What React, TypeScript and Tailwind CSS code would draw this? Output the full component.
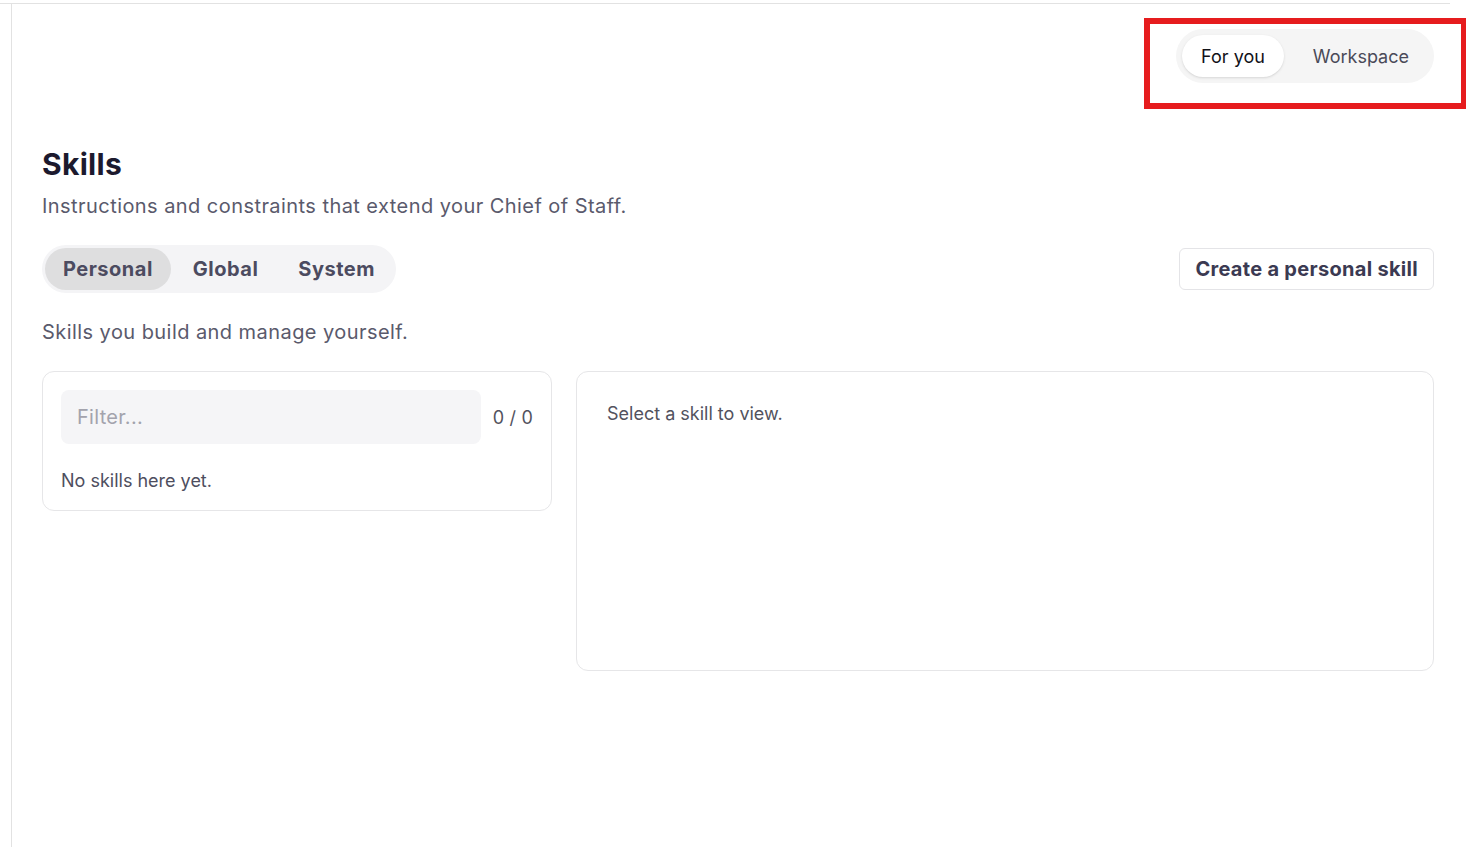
import { useState } from 'react';

const tabs = ['Personal', 'Global', 'System'];

export default function App() {
  const [scope, setScope] = useState<'you' | 'workspace'>('you');
  const [tab, setTab] = useState('Personal');
  const [filter, setFilter] = useState('');

  return (
    <div className="min-h-[847px] bg-white font-['Inter',sans-serif] text-[#52525e]">
      <div className="ml-0 w-[1450px] border-t border-[#e2e2e2] mt-[3px]" />
      <div className="relative ml-[11px] min-h-[843px] border-l border-[#e2e2e2]">
        <div className="pr-8 pl-[30px]">
          <div className="flex justify-end pt-[25px]">
            <div className="flex items-center gap-[10px] rounded-full bg-[#f5f5f5] p-[6px]">
              <button
                onClick={() => setScope('you')}
                className={`h-[42px] rounded-full px-[19px] text-[18px] ${
                  scope === 'you' ? 'bg-white text-[#111118] shadow-sm' : 'text-[#4a4a58]'
                }`}
              >
                For you
              </button>
              <button
                onClick={() => setScope('workspace')}
                className={`h-[42px] rounded-full px-[19px] text-[18px] ${
                  scope === 'workspace' ? 'bg-white text-[#111118] shadow-sm' : 'text-[#4a4a58]'
                }`}
              >
                Workspace
              </button>
            </div>
          </div>

          <h1 className="mt-[63px] text-[30px] font-bold leading-[36px] tracking-[0.01em] text-[#1c1a2e]">Skills</h1>
          <p className="mt-[10px] text-[20px] leading-[28px] tracking-[0.022em] text-[#5a5a6c]">
            Instructions and constraints that extend your Chief of Staff.
          </p>

          <div className="mt-[25px] flex items-center justify-between">
            <div className="flex items-center gap-[4px] rounded-full bg-[#f4f4f6] p-[3px]">
              {tabs.map((t) => (
                <button
                  key={t}
                  onClick={() => setTab(t)}
                  className={`h-[42px] rounded-full px-[18px] text-[20px] font-bold tracking-[0.025em] text-[#4c4b60] ${
                    tab === t ? 'bg-[#dededf]' : ''
                  }`}
                >
                  {t}
                </button>
              ))}
            </div>
            <button className="h-[42px] rounded-md border border-[#e4e4e7] bg-white px-[15px] text-[20px] font-bold tracking-[0.015em] text-[#3b3a52]">
              Create a personal skill
            </button>
          </div>

          <p className="mt-[25px] text-[20px] leading-[28px] tracking-[0.022em] text-[#5a5a6c]">
            Skills you build and manage yourself.
          </p>

          <div className="mt-[25px] flex items-start gap-[24px]">
            <div className="w-[510px] rounded-xl border border-[#e6e6e8] px-[18px] pt-[18px] pb-[17px]">
              <div className="flex items-center gap-3">
                <input
                  value={filter}
                  onChange={(e) => setFilter(e.target.value)}
                  placeholder="Filter..."
                  className="h-[54px] min-w-0 flex-1 rounded-lg bg-[#f5f5f7] px-4 text-[20px] tracking-[0.015em] text-[#33334a] outline-none placeholder:text-[#a3a3ad]"
                />
                <span className="shrink-0 whitespace-nowrap text-[18px] tracking-[0.01em] text-[#52525e]">0 / 0</span>
              </div>
              <p className="mt-[25px] text-[18px] leading-[24px] text-[#4e4e5e]">No skills here yet.</p>
            </div>
            <div className="h-[300px] flex-1 rounded-xl border border-[#e6e6e8] px-[30px] pt-[30px]">
              <p className="text-[18px] leading-[24px] text-[#52525e]">Select a skill to view.</p>
            </div>
          </div>
        </div>

        {/* highlight box drawn round the scope switch */}
        <div className="pointer-events-none absolute left-[1132px] top-[14px] h-[91px] w-[323px] border-[6px] border-[#e61c1e]" />
      </div>
    </div>
  );
}
